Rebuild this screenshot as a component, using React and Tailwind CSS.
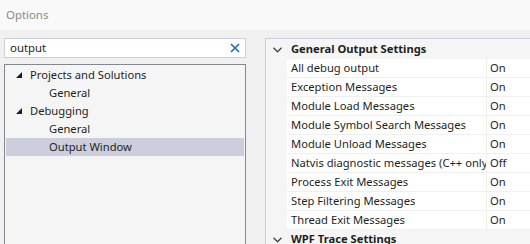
import React from "react";

const tree = [
  { label: "Projects and Solutions", level: 0 },
  { label: "General", level: 1 },
  { label: "Debugging", level: 0 },
  { label: "General", level: 1 },
  { label: "Output Window", level: 1, selected: true },
];

const settings = [
  ["All debug output", "On"],
  ["Exception Messages", "On"],
  ["Module Load Messages", "On"],
  ["Module Symbol Search Messages", "On"],
  ["Module Unload Messages", "On"],
  ["Natvis diagnostic messages (C++ only)", "Off"],
  ["Process Exit Messages", "On"],
  ["Step Filtering Messages", "On"],
  ["Thread Exit Messages", "On"],
];

function Expanded() {
  return (
    <svg width="6" height="6" viewBox="0 0 6 6" className="shrink-0">
      <polygon points="6,0 6,6 0,6" fill="#1e1e1e" />
    </svg>
  );
}

function Chevron() {
  return (
    <svg width="9" height="6" viewBox="0 0 9 6" className="shrink-0">
      <polyline points="0.5,0.8 4.5,4.8 8.5,0.8" fill="none" stroke="#444" strokeWidth="1.3" />
    </svg>
  );
}

function Category({ title }) {
  return (
    <div className="flex h-[19px] items-center">
      <div className="w-[21px] flex justify-center pl-[1px]">
        <Chevron />
      </div>
      <span className="pl-[4px] font-bold text-[#1e1e1e]">{title}</span>
    </div>
  );
}

export default function App() {
  return (
    <div
      className="w-[530px] h-[244px] overflow-hidden bg-[#f0f0f0] text-[11.2px] text-[#1e1e1e] flex flex-col"
      style={{ fontFamily: '"Segoe UI", "Noto Sans", sans-serif' }}
    >
      {/* Title */}
      <div className="h-[30px] shrink-0 bg-[#f9f9f9] px-[6px] flex items-center text-[11.4px] text-[#8a8a8a]">
        Options
      </div>

      <div className="flex flex-1 pt-[8px] min-h-0">
        {/* Left column */}
        <div className="w-[242px] ml-[4px] flex flex-col gap-[6px] shrink-0">
          <div className="h-[20px] bg-white border border-[#cccedb] flex items-center pl-[5px] pr-[5px]">
            <span className="flex-1 text-[11.4px] leading-none">output</span>
            <svg width="10" height="10" viewBox="0 0 10 10">
              <path d="M1 1 L9 9 M9 1 L1 9" stroke="#1e72bd" strokeWidth="1.7" />
            </svg>
          </div>
          <div className="flex-1 bg-[#f5f5f5] border border-[#828790] border-b-0 p-[1px] h-[200px]">
            {tree.map((item, i) => (
              <div
                key={i}
                className={
                  "h-[18px] flex items-center gap-[8px] " +
                  (item.selected ? "bg-[#cccedb] " : "") +
                  (item.level === 0 ? "pl-[10px]" : "pl-[43px]")
                }
              >
                {item.level === 0 && <Expanded />}
                <span>{item.label}</span>
              </div>
            ))}
          </div>
        </div>

        {/* Property grid */}
        <div className="ml-[19px] flex-1 bg-[#f5f5f5] border-l border-t border-[#cccedb] pt-[1px] h-[220px]">
          <Category title="General Output Settings" />
          {settings.map(([name, value]) => (
            <div key={name} className="flex h-[19px]">
              <div className="w-[21px] shrink-0" />
              <div className="w-[200px] shrink-0 bg-white border-b border-r border-[#f0f0f0] pl-[4px] flex items-center overflow-hidden whitespace-nowrap">
                <span className="block overflow-hidden">{name}</span>
              </div>
              <div className="flex-1 bg-white border-b border-[#f0f0f0] pl-[3px] flex items-center">
                {value}
              </div>
            </div>
          ))}
          <Category title="WPF Trace Settings" />
        </div>
      </div>
    </div>
  );
}
